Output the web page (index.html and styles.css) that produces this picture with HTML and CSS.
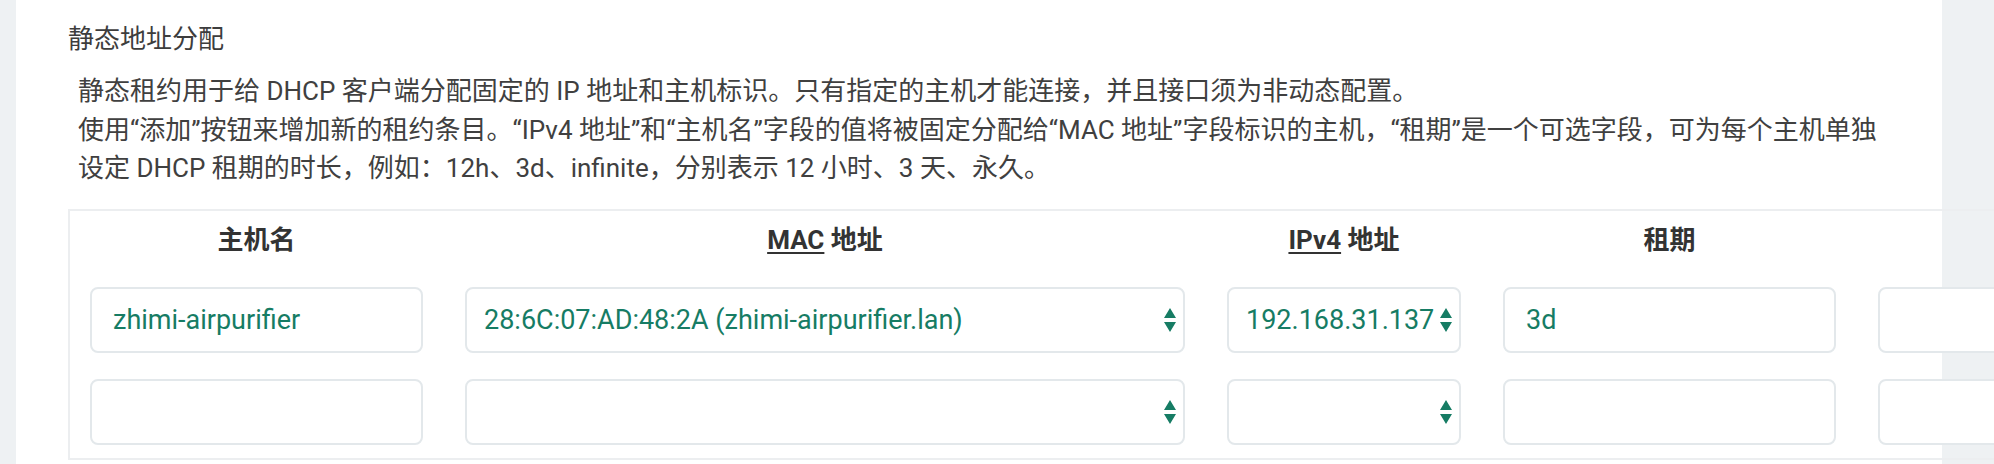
FILE: index.html
```html
<!DOCTYPE html>
<html lang="zh-CN">
<head>
<meta charset="utf-8">
<title>静态地址分配</title>
<link rel="stylesheet" href="styles.css">
</head>
<body>
<div class="panel">
  <h3 class="title">静态地址分配</h3>
  <div class="desc">静态租约用于给 DHCP 客户端分配固定的 IP 地址和主机标识。只有指定的主机才能连接，并且接口须为非动态配置。<br>使用“添加”按钮来增加新的租约条目。“IPv4 地址”和“主机名”字段的值将被固定分配给“MAC 地址”字段标识的主机，“租期”是一个可选字段，可为每个主机单独设定 DHCP 租期的时长，例如：12h、3d、infinite，分别表示 12 小时、3 天、永久。</div>
  <table class="leases">
    <thead>
      <tr>
        <th>主机名</th>
        <th><abbr title="Media Access Control">MAC</abbr> 地址</th>
        <th><abbr title="Internet Protocol Version 4">IPv4</abbr> 地址</th>
        <th>租期</th>
        <th></th>
      </tr>
    </thead>
    <tbody>
      <tr>
        <td><input class="field w-host" type="text" value="zhimi-airpurifier"></td>
        <td>
          <span class="select-wrap">
            <select class="field sel w-mac"><option>28:6C:07:AD:48:2A (zhimi-airpurifier.lan)</option></select>
            <svg class="arrows" viewBox="0 0 12 24" width="12" height="24"><path d="M0 10 L6 0 L12 10 Z M0 14 L12 14 L6 24 Z"/></svg>
          </span>
        </td>
        <td>
          <span class="select-wrap">
            <select class="field sel w-ip"><option>192.168.31.137</option></select>
            <svg class="arrows" viewBox="0 0 12 24" width="12" height="24"><path d="M0 10 L6 0 L12 10 Z M0 14 L12 14 L6 24 Z"/></svg>
          </span>
        </td>
        <td><input class="field w-lease" type="text" value="3d"></td>
        <td><input class="field w-lease" type="text" value=""></td>
      </tr>
      <tr>
        <td><input class="field w-host" type="text" value=""></td>
        <td>
          <span class="select-wrap">
            <select class="field sel w-mac"><option></option></select>
            <svg class="arrows" viewBox="0 0 12 24" width="12" height="24"><path d="M0 10 L6 0 L12 10 Z M0 14 L12 14 L6 24 Z"/></svg>
          </span>
        </td>
        <td>
          <span class="select-wrap">
            <select class="field sel w-ip"><option></option></select>
            <svg class="arrows" viewBox="0 0 12 24" width="12" height="24"><path d="M0 10 L6 0 L12 10 Z M0 14 L12 14 L6 24 Z"/></svg>
          </span>
        </td>
        <td><input class="field w-lease" type="text" value=""></td>
        <td><input class="field w-lease" type="text" value=""></td>
      </tr>
    </tbody>
  </table>
</div>
</body>
</html>
```

FILE: styles.css
```css
html, body {
  margin: 0;
  padding: 0;
}

body {
  background: #eef1f3;
  font-family: Roboto, "Noto Sans CJK SC", sans-serif;
  width: 1994px;
  height: 464px;
  overflow: hidden;
}

.panel {
  margin-left: 16px;
  width: 1926px;
  height: 464px;
  box-sizing: border-box;
  background: #ffffff;
  padding: 19px 0 0 52px;
}

.title {
  margin: 0;
  font-size: 26px;
  font-weight: normal;
  line-height: 40px;
  color: #3d3d3d;
}

.desc {
  margin: 13px 0 0 0;
  padding-left: 10px;
  width: 1817px;
  font-size: 26px;
  line-height: 38.5px;
  color: #404040;
}

.leases {
  margin-top: 21px;
  border: 2px solid #eceef0;
  border-collapse: separate;
  border-spacing: 0;
}

.leases th {
  font-size: 26px;
  font-weight: bold;
  color: #333333;
  line-height: 38px;
  padding: 10px 21px 15px;
  text-align: center;
}

.leases abbr {
  text-decoration: underline;
  text-decoration-thickness: 2px;
  text-underline-offset: 3px;
}

.leases td {
  padding: 13px 21px;
}

.leases th:first-child,
.leases td:first-child {
  padding-left: 20px;
}

.field {
  display: block;
  box-sizing: border-box;
  height: 66px;
  margin: 0;
  border: 2px solid #e3e8eb;
  border-radius: 8px;
  background: #ffffff;
  font-family: Roboto, "Noto Sans CJK SC", sans-serif;
  font-size: 27px;
  color: #167c64;
  padding: 0 0 0 21px;
  outline: none;
}

.sel {
  appearance: none;
  -webkit-appearance: none;
  padding-left: 17px;
  padding-right: 24px;
}

.w-host { width: 333px; }
.w-mac { width: 720px; }
.w-ip { width: 234px; padding-right: 0; }
.w-lease { width: 333px; }

.select-wrap {
  position: relative;
  display: block;
}

.arrows {
  position: absolute;
  right: 9px;
  top: 50%;
  margin-top: -12px;
  fill: #167c64;
  pointer-events: none;
}
```
